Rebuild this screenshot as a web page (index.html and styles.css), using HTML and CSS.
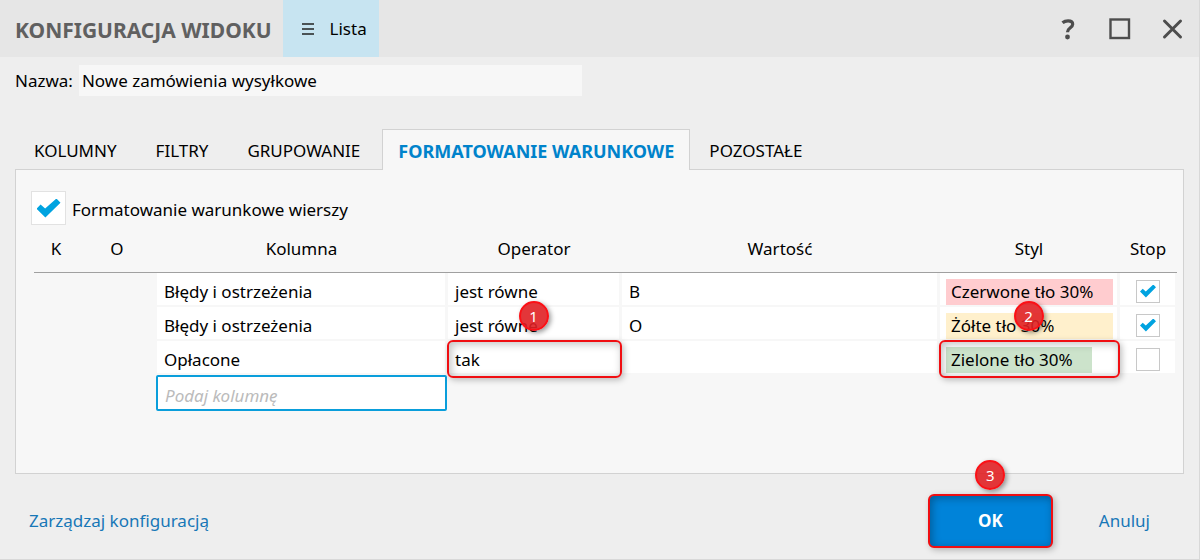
FILE: index.html
```html
<!DOCTYPE html>
<html lang="pl">
<head>
<meta charset="utf-8">
<meta name="viewport" content="width=device-width, initial-scale=1">
<title>Konfiguracja widoku</title>
<link rel="stylesheet" href="styles.css">
</head>
<body>
<main class="dialog">
  <header class="titlebar">
    <h1 class="title">KONFIGURACJA WIDOKU</h1>
    <button class="view-type" type="button">
      <svg width="12" height="12" viewBox="0 0 12 12" aria-hidden="true"><path d="M0 1h12M0 6h12M0 11h12" stroke="#222" stroke-width="1.6"/></svg>
      Lista
    </button>
    <div class="window-controls">
      <button class="window-button" type="button" aria-label="Pomoc">
        <svg width="24" height="24" viewBox="0 0 24 24" fill="none" stroke="#4d4d4d" stroke-width="3.2"><path d="M6.500 5.800C8 4.500 10 3.800 12.100 3.800C15 3.800 16.700 5.200 16.700 7.300C16.700 10.800 11.500 10.900 11.500 15.200"/><circle cx="11.500" cy="20" r="2.400" fill="#4d4d4d" stroke="none"/></svg>
      </button>
      <button class="window-button" type="button" aria-label="Maksymalizuj">
        <svg width="24" height="24" viewBox="0 0 24 24" fill="none" stroke="#4d4d4d" stroke-width="2.400"><rect x="2.500" y="2.500" width="18.500" height="18.500"/></svg>
      </button>
      <button class="window-button" type="button" aria-label="Zamknij">
        <svg width="24" height="24" viewBox="0 0 24 24" fill="none" stroke="#4d4d4d" stroke-width="3" stroke-linecap="round"><path d="M4.500 4L20.500 20M20.500 4L4.500 20"/></svg>
      </button>
    </div>
  </header>

  <div class="name-row">
    <label for="view-name">Nazwa:</label>
    <input class="name-input" id="view-name" type="text" value="Nowe zamówienia wysyłkowe">
  </div>

  <div class="tabs" role="tablist">
    <button class="tab" type="button" role="tab">KOLUMNY</button>
    <button class="tab" type="button" role="tab">FILTRY</button>
    <button class="tab" type="button" role="tab">GRUPOWANIE</button>
    <button class="tab tab-active" type="button" role="tab" aria-selected="true">FORMATOWANIE WARUNKOWE</button>
    <button class="tab" type="button" role="tab">POZOSTAŁE</button>
  </div>

  <section class="panel">
    <label class="row-format">
      <input class="check check-large" type="checkbox" checked>
      <span class="row-format-text">Formatowanie warunkowe wierszy</span>
    </label>
    <table class="rules">
      <colgroup>
        <col class="col-k"><col class="col-o"><col class="col-column"><col class="col-operator"><col><col class="col-style"><col class="col-stop">
      </colgroup>
      <thead>
        <tr><th>K</th><th>O</th><th>Kolumna</th><th>Operator</th><th>Wartość</th><th>Styl</th><th>Stop</th></tr>
      </thead>
      <tbody>
        <tr>
          <td class="blank"></td><td class="blank"></td>
          <td>Błędy i ostrzeżenia</td><td>jest równe</td><td>B</td>
          <td><span class="swatch swatch-red">Czerwone tło 30%</span></td>
          <td class="stop"><input class="check" type="checkbox" aria-label="Stop, reguła 1" checked></td>
        </tr>
        <tr>
          <td class="blank"></td><td class="blank"></td>
          <td>Błędy i ostrzeżenia</td><td>jest równe</td><td>O</td>
          <td><span class="swatch swatch-yellow">Żółte tło 30%</span></td>
          <td class="stop"><input class="check" type="checkbox" aria-label="Stop, reguła 2" checked></td>
        </tr>
        <tr>
          <td class="blank"></td><td class="blank"></td>
          <td>Opłacone</td>
          <td class="marked">tak<span class="frame"></span><span class="badge">1</span></td>
          <td></td>
          <td class="marked"><span class="swatch swatch-green">Zielone tło 30%</span><span class="frame"></span><span class="badge">2</span></td>
          <td class="stop"><input class="check" type="checkbox" aria-label="Stop, reguła 3"></td>
        </tr>
        <tr>
          <td class="blank"></td><td class="blank"></td>
          <td class="new-rule"><input class="new-input" type="text" placeholder="Podaj kolumnę" aria-label="Podaj kolumnę"></td>
          <td class="blank" colspan="4"></td>
        </tr>
      </tbody>
    </table>
  </section>

  <footer class="actions">
    <a class="link manage" href="#">Zarządzaj konfiguracją</a>
    <div class="confirm">
      <button class="ok" type="button">OK</button>
      <span class="badge badge-ok">3</span>
    </div>
    <a class="link" href="#">Anuluj</a>
  </footer>
</main>
</body>
</html>
```
FILE: styles.css
```css
* {
  box-sizing: border-box;
}

body {
  margin: 0;
  background: #eeeeee;
  color: #000;
  font: 17px/24px "Noto Sans", "Open Sans", sans-serif;
}

button,
input {
  font: inherit;
  color: inherit;
}

button {
  border: 0;
  background: none;
  cursor: pointer;
}

.dialog {
  display: flex;
  flex-direction: column;
  min-height: 100vh;
  border-right: 1px solid #d8d8d8;
  border-bottom: 1px solid #d8d8d8;
}

.titlebar {
  display: flex;
  align-items: stretch;
  min-height: 57px;
  padding-right: 15px;
  background: #e6e6e6;
}

.title {
  margin: 0;
  padding: 18px 11px 0 15px;
  color: #606060;
  font-size: 21px;
  line-height: 24px;
  font-weight: 700;
}

.view-type {
  display: flex;
  align-items: center;
  gap: 16px;
  padding: 0 12px 0 19px;
  background: #c7e4f1;
}

.window-controls {
  display: flex;
  align-items: center;
  gap: 28px;
  margin-left: auto;
}

.window-button {
  display: flex;
  padding: 0;
}

.name-row {
  display: flex;
  align-items: center;
  gap: 6px;
  padding: 8px 15px 0;
}

.name-input {
  flex: 0 1 503px;
  min-width: 0;
  height: 31px;
  padding: 0 3px;
  border: 0;
  background: #f7f7f7;
}

.tabs {
  display: flex;
  position: relative;
  margin: 33px 15px -1px;
}

.tab {
  height: 41px;
  padding: 2px 19px 0 18px;
  border: 1px solid transparent;
  border-bottom: 0;
}

.tab-active {
  margin-left: 2px;
  padding: 2px 15px 0;
  border-color: #d2d2d2;
  background: #f7f7f7;
  color: #0083cb;
  font-size: 18px;
  font-weight: 700;
}

.panel {
  min-height: 305px;
  margin: 0 15px;
  padding: 21px 7px 0 15px;
  border: 1px solid #d2d2d2;
  background: #f7f7f7;
}

.row-format {
  display: inline-flex;
  align-items: center;
  gap: 6px;
}

.row-format-text {
  padding-top: 4px;
}

.check {
  display: grid;
  place-content: center;
  appearance: none;
  width: 24px;
  height: 23px;
  margin: 0;
  border: 1px solid #c8c8c8;
  background: #fff;
}

.check:checked::before {
  content: "";
  width: 16px;
  height: 13px;
  background: #00a3e0;
  clip-path: polygon(0 54%, 17% 32%, 36% 53%, 83% 0, 100% 22%, 37% 100%);
}

.check-large {
  width: 35px;
  height: 34px;
  border-color: #e2e2e2;
}

.check-large:checked::before {
  width: 24px;
  height: 19px;
}

.rules {
  width: calc(100% - 2px);
  margin-left: 3px;
  border-collapse: separate;
  border-spacing: 0;
  table-layout: fixed;
}

.col-k {
  width: 44px;
}

.col-o {
  width: 78px;
}

.col-column {
  width: 291px;
}

.col-operator {
  width: 174px;
}

.col-style {
  width: 180px;
}

.col-stop {
  width: 58px;
}

.rules th {
  height: 48px;
  padding: 0;
  border-bottom: 1px solid #a0a0a0;
  font-weight: 400;
}

.rules td {
  height: 34px;
  padding: 5px 7px 0;
  border: solid #f7f7f7;
  border-width: 0 2px 2px 1px;
  background: #fff;
}

.rules .blank {
  background: none;
}

.rules .stop {
  padding: 4px 16px 0;
}

.rules .marked {
  position: relative;
}

.rules .new-rule {
  padding: 0;
  border: 0;
}

.swatch {
  display: block;
  height: 26px;
  margin: 0 -3px 0 -1px;
  padding: 0 5px;
  line-height: 26px;
}

.swatch-red {
  background: #ffcccf;
}

.swatch-yellow {
  background: #fff0cc;
}

.swatch-green {
  width: 146px;
  background: #cce3cb;
}

.frame {
  position: absolute;
  inset: -1px -3px -5px -1px;
  border: 2px solid #f00e12;
  border-radius: 6px;
  box-shadow: 2px 2px 6px rgba(0, 0, 0, 0.25), inset 2px 2px 8px rgba(0, 0, 0, 0.25);
}

.badge {
  position: absolute;
  top: -40px;
  left: 50%;
  width: 30px;
  height: 30px;
  margin-left: -15px;
  border: 2px solid #fb1016;
  border-radius: 50%;
  background: rgba(224, 32, 36, 0.9);
  box-shadow: 2px 2px 5px rgba(0, 0, 0, 0.4);
  color: #fff;
  font-size: 15px;
  line-height: 26px;
  text-align: center;
}

.new-input {
  display: block;
  width: 100%;
  height: 36px;
  padding: 4px 7px 0;
  border: 2px solid #0a9edb;
  border-radius: 2px;
  background: #fff;
}

.new-input::placeholder {
  color: #bbb;
  font-style: italic;
  opacity: 1;
}

.actions {
  display: flex;
  align-items: center;
  padding: 20px 49px 11px 29px;
}

.link {
  color: #1777b7;
  text-decoration: none;
}

.manage {
  margin-right: auto;
}

.confirm {
  position: relative;
  margin-right: 46px;
}

.ok {
  display: block;
  width: 125px;
  height: 54px;
  border: 2px solid #f00e12;
  border-radius: 6px;
  background: #0083d9;
  box-shadow: 2px 2px 6px rgba(0, 0, 0, 0.25), inset 2px 2px 8px rgba(0, 0, 0, 0.3);
  color: #fff;
  font-weight: 700;
}

.badge-ok {
  top: -34px;
}
```
